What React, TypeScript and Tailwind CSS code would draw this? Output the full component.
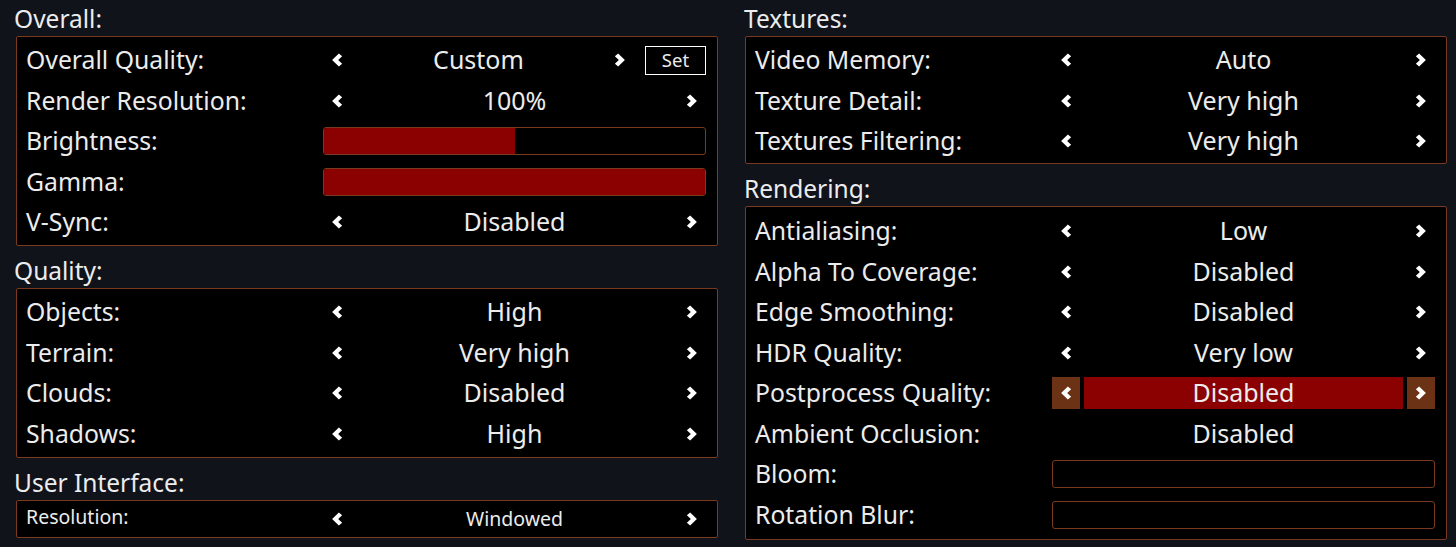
import React from "react";

const FONT = { fontFamily: '"Noto Sans", "Open Sans", sans-serif' };

function ChevronLeft() {
  return (
    <svg width="14" height="18" viewBox="0 0 12 14" className="block shrink-0">
      <path d="M7.6 1.4 L10.4 3.8 L7 7 L10.4 10.2 L7.6 12.6 L1.8 7 Z" fill="white" />
    </svg>
  );
}
function ChevronRight() {
  return (
    <svg width="14" height="18" viewBox="0 0 12 14" className="block shrink-0">
      <path d="M4.4 1.4 L1.6 3.8 L5 7 L1.6 10.2 L4.4 12.6 L10.2 7 Z" fill="white" />
    </svg>
  );
}

function Header({ children, first }: { children: React.ReactNode; first?: boolean }) {
  return (
    <div className={`h-[36px] leading-[38px] text-[24.5px] text-[#ececec] whitespace-nowrap ${first ? "" : "mt-[6px]"}`}>
      {children}
    </div>
  );
}

function Panel({ children, h, pt }: { children: React.ReactNode; h: string; pt: string }) {
  return (
    <div className={`border-[1.5px] border-[#7a3a1f] bg-black rounded-[2px] ${h} ${pt} flex flex-col`}>
      {children}
    </div>
  );
}

function Row({ label, children }: { label: string; children?: React.ReactNode }) {
  return (
    <div className="h-[40.5px] flex items-center shrink-0">
      <div className="w-[306px] pl-[9px] text-[#ececec] whitespace-nowrap text-[24.75px] leading-[30px]">{label}</div>
      <div className="w-[383px] h-full flex items-center">{children}</div>
    </div>
  );
}

function Selector({ value, small, highlight, noArrows }: { value: string; small?: boolean; highlight?: boolean; noArrows?: boolean }) {
  return (
    <div className="flex items-center w-full h-[32px] gap-[4px]">
      <div className={`w-[28px] h-full flex items-center justify-center ${highlight ? "bg-[#6b3216]" : ""}`}>
        {!noArrows && <ChevronLeft />}
      </div>
      <div className={`flex-1 h-full flex items-center justify-center text-[#ececec] whitespace-nowrap ${small ? "text-[19.5px]" : "text-[25px]"} ${highlight ? "bg-[#8b0000]" : ""}`}>
        <span className="-mt-[1px]">{value}</span>
      </div>
      <div className={`w-[28px] h-full flex items-center justify-center ${highlight ? "bg-[#6b3216]" : ""}`}>
        {!noArrows && <ChevronRight />}
      </div>
    </div>
  );
}

function Slider({ pct }: { pct: number }) {
  return (
    <div className="w-full h-[28px] border-[1.5px] border-[#7a3a1f] rounded-[3px] bg-black overflow-hidden">
      <div className="h-full bg-[#8b0000]" style={{ width: `${pct}%` }} />
    </div>
  );
}

export default function App() {
  return (
    <div className="w-[1456px] h-[547px] bg-[#10131a] flex overflow-hidden" style={FONT}>
      <div className="w-[744px] shrink-0 pl-[14px] pr-[26px] flex flex-col">
        <Header first>Overall:</Header>
        <div className="pl-[2px]">
          <Panel h="h-[210px]" pt="pt-[3px]">
            <Row label="Overall Quality:">
              <div className="flex items-center w-full h-[32px]">
                <div className="w-[28px] h-full flex items-center justify-center"><ChevronLeft /></div>
                <div className="flex-1 h-full flex items-center justify-center text-[25px] text-[#ececec]"><span className="-mt-[1px]">Custom</span></div>
                <div className="w-[28px] h-full flex items-center justify-center"><ChevronRight /></div>
                <div className="ml-[11px] w-[61px] h-[29px] border border-white flex items-center justify-center text-[18.5px] text-[#ececec]">Set</div>
              </div>
            </Row>
            <Row label="Render Resolution:"><Selector value="100%" /></Row>
            <Row label="Brightness:"><Slider pct={50} /></Row>
            <Row label="Gamma:"><Slider pct={100} /></Row>
            <Row label="V-Sync:"><Selector value="Disabled" /></Row>
          </Panel>
        </div>
        <Header>Quality:</Header>
        <div className="pl-[2px]">
          <Panel h="h-[170px]" pt="pt-[3px]">
            <Row label="Objects:"><Selector value="High" /></Row>
            <Row label="Terrain:"><Selector value="Very high" /></Row>
            <Row label="Clouds:"><Selector value="Disabled" /></Row>
            <Row label="Shadows:"><Selector value="High" /></Row>
          </Panel>
        </div>
        <Header>User Interface:</Header>
        <div className="pl-[2px]">
          <div className="border-[1.5px] border-[#7a3a1f] bg-black rounded-[2px] h-[38px] flex items-center">
            <div className="h-[36px] flex items-center w-full">
              <div className="w-[306px] pl-[9px] text-[#ececec] text-[19.5px] -mt-[4px]">Resolution:</div>
              <div className="w-[383px]"><Selector value="Windowed" small /></div>
            </div>
          </div>
        </div>
      </div>
      <div className="w-[703px] shrink-0 flex flex-col">
        <Header first>Textures:</Header>
        <div className="pl-[1px]">
          <Panel h="h-[128px]" pt="pt-[3px]">
            <Row label="Video Memory:"><Selector value="Auto" /></Row>
            <Row label="Texture Detail:"><Selector value="Very high" /></Row>
            <Row label="Textures Filtering:"><Selector value="Very high" /></Row>
          </Panel>
        </div>
        <Header>Rendering:</Header>
        <div className="pl-[1px]">
          <Panel h="h-[334px]" pt="pt-[4px]">
            <Row label="Antialiasing:"><Selector value="Low" /></Row>
            <Row label="Alpha To Coverage:"><Selector value="Disabled" /></Row>
            <Row label="Edge Smoothing:"><Selector value="Disabled" /></Row>
            <Row label="HDR Quality:"><Selector value="Very low" /></Row>
            <Row label="Postprocess Quality:"><Selector value="Disabled" highlight /></Row>
            <Row label="Ambient Occlusion:"><Selector value="Disabled" noArrows /></Row>
            <Row label="Bloom:"><Slider pct={0} /></Row>
            <Row label="Rotation Blur:"><Slider pct={0} /></Row>
          </Panel>
        </div>
      </div>
    </div>
  );
}
